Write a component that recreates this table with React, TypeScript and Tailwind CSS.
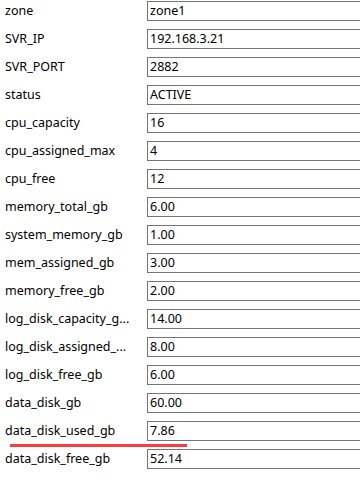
import React from "react";

const rows: [string, string][] = [
  ["zone", "zone1"],
  ["SVR_IP", "192.168.3.21"],
  ["SVR_PORT", "2882"],
  ["status", "ACTIVE"],
  ["cpu_capacity", "16"],
  ["cpu_assigned_max", "4"],
  ["cpu_free", "12"],
  ["memory_total_gb", "6.00"],
  ["system_memory_gb", "1.00"],
  ["mem_assigned_gb", "3.00"],
  ["memory_free_gb", "2.00"],
  ["log_disk_capacity_g...", "14.00"],
  ["log_disk_assigned_...", "8.00"],
  ["log_disk_free_gb", "6.00"],
  ["data_disk_gb", "60.00"],
  ["data_disk_used_gb", "7.86"],
  ["data_disk_free_gb", "52.14"],
];

export default function App() {
  return (
    <div
      className="relative w-[360px] h-[483px] overflow-hidden bg-white text-[12.5px] text-black"
      style={{ fontFamily: '"Noto Sans", "Open Sans", sans-serif' }}
    >
      <div className="flex flex-col gap-[8px] pt-[1px]">
        {rows.map(([k, v]) => (
          <div key={k} className="flex items-center h-[20px]">
            <div className="w-[147px] shrink-0 pl-[5px] whitespace-nowrap leading-[20px]">{k}</div>
            <div className="w-[240px] shrink-0 h-[20px] border border-[#767676] px-[2px] leading-[18px] whitespace-nowrap">
              {v}
            </div>
          </div>
        ))}
      </div>
      <div className="absolute left-[10px] top-[444px] w-[177px] h-[3px] bg-[#ff3b3b]" />
    </div>
  );
}
